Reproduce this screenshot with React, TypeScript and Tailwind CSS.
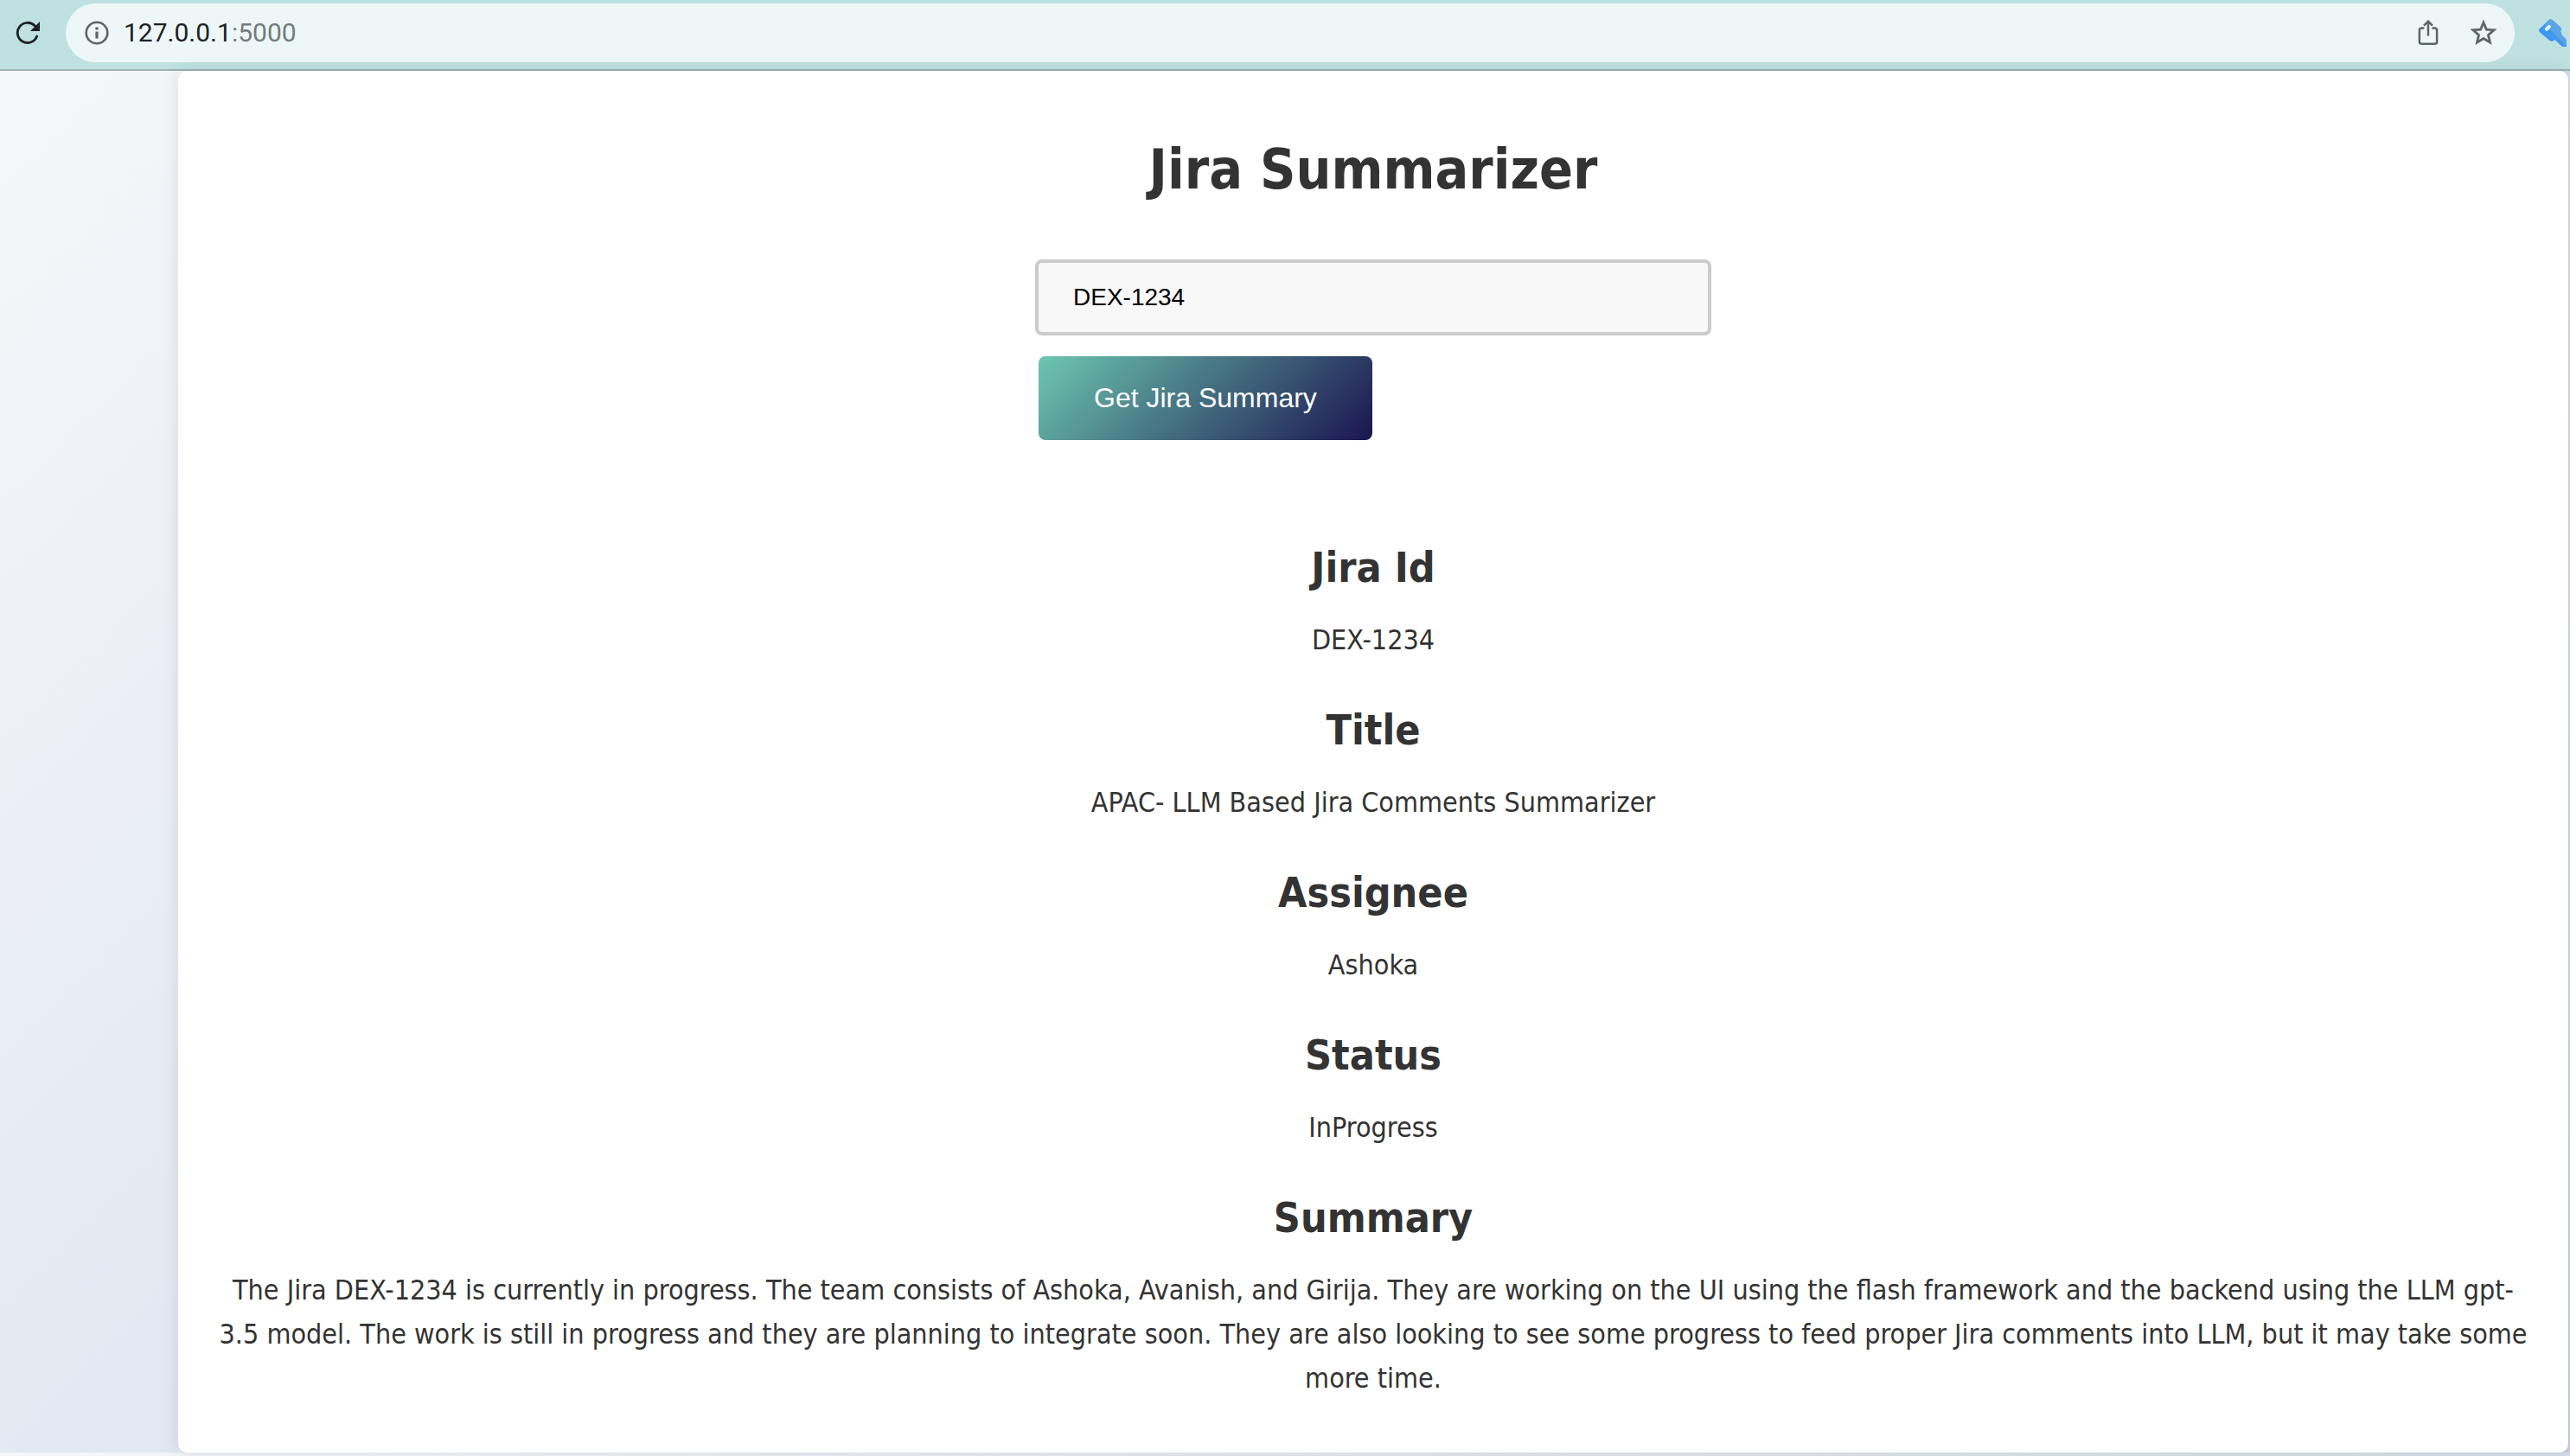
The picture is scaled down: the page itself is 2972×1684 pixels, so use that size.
const details = [
  { label: "Jira Id", value: "DEX-1234" },
  { label: "Title", value: "APAC- LLM Based Jira Comments Summarizer" },
  { label: "Assignee", value: "Ashoka" },
  { label: "Status", value: "InProgress" },
  {
    label: "Summary",
    value:
      "The Jira DEX-1234 is currently in progress. The team consists of Ashoka, Avanish, and Girija. They are working on the UI using the flash framework and the backend using the LLM gpt-3.5 model. The work is still in progress and they are planning to integrate soon. They are also looking to see some progress to feed proper Jira comments into LLM, but it may take some more time.",
  },
];

function ReloadIcon() {
  return (
    <svg width="28" height="28" viewBox="0 0 28 28" fill="none" aria-hidden="true">
      <path d="M24.7 18A11.6 11.6 0 1 1 22.2 5.8l2 2" stroke="#202124" strokeWidth="2.8" strokeLinecap="round" />
      <path d="M28 1v11H17z" fill="#202124" />
    </svg>
  );
}

function InfoIcon() {
  return (
    <svg width="28" height="28" viewBox="0 0 28 28" fill="none" aria-hidden="true">
      <circle cx="14" cy="14" r="12.3" stroke="#5f6368" strokeWidth="2.6" />
      <path d="M12.4 7.4h3.2v3.2h-3.2zM12.4 12.600h3.200v8h-3.200z" fill="#5f6368" />
    </svg>
  );
}

function ShareIcon() {
  return (
    <svg width="24" height="30" viewBox="0 0 24 30" fill="none" stroke="#5f6368" strokeWidth="2.5" aria-hidden="true">
      <path d="M7.500 9.400H4.400A2.500 2.500 0 0 0 1.900 11.900v13.400a2.500 2.500 0 0 0 2.500 2.500h15.200a2.500 2.500 0 0 0 2.500-2.500v-13.400a2.500 2.500 0 0 0-2.500-2.500H16.500" />
      <path d="M12 18.500V2.500M7 6.700l5-5 5 5" />
    </svg>
  );
}

function StarIcon() {
  return (
    <svg width="36" height="36" viewBox="0 0 24 24" fill="#5f6368" stroke="#5f6368" strokeWidth="0.3" aria-hidden="true">
      <path d="M22 9.240l-7.190-.620L12 2 9.190 8.630 2 9.240l5.460 4.730L5.820 21 12 17.270 18.180 21l-1.630-7.030L22 9.240zM12 15.400l-3.760 2.270 1-4.280-3.320-2.880 4.380-.380L12 6.100l1.710 4.040 4.380.380-3.320 2.880 1 4.280L12 15.400z" />
    </svg>
  );
}

function KeyIcon() {
  return (
    <svg width="32" height="32" viewBox="0 0 32 32" aria-hidden="true">
      <path d="M.6 11.500 11.800.8q1.700-1.300 3.400 0L25 9.500q1.400 1.500.6 3.500l-.6 1.500 1.500 2.500-.5 1.500 2 .8.500 2 2 .7 1.500 3.500V32h-5l-8.500-8-2.500 1.500q-2 .8-3.500-.5L.8 15q-1.500-1.700-.2-3.500z" fill="#3f97f0" />
      <path d="M6.300 6 11.800.8q1.700-1.300 3.400 0L25 9.500q1.400 1.500.6 3.500l-.6 1.500 1.500 2.500-.5 1.500 2 .8.500 2 2 .7 1.500 3.500V31z" fill="#5aa5e4" />
      <path d="M7 10.700 11 7.100q1.200-.8 2.300.3t.3 2.300L10 13.500q-1.200.7-2.400-.3T7 10.700z" fill="#e6f4fa" />
    </svg>
  );
}

export default function App() {
  return (
    <div className="min-h-screen overflow-x-hidden font-['DejaVu_Sans_Condensed','DejaVu_Sans',sans-serif] text-[#333333]">
      <header className="flex h-[82px] items-center border-b-2 border-[#9bb3b6] bg-[#bfe1e2] pb-1 pl-[18px]">
        <button type="button" aria-label="Reload" className="shrink-0">
          <ReloadIcon />
        </button>
        <div className="ml-[30px] flex h-[68px] flex-1 items-center rounded-full bg-[#eef7f8] pr-[18px] pl-[22px]">
          <button type="button" aria-label="View site information" className="shrink-0">
            <InfoIcon />
          </button>
          <p className="ml-[17px] flex-1 font-[Roboto,sans-serif] text-[30px] leading-9 text-[#202124]">
            127.0.0.1<span className="text-[#747a7d]">:5000</span>
          </p>
          <button type="button" aria-label="Share this page" className="shrink-0">
            <ShareIcon />
          </button>
          <button type="button" aria-label="Bookmark this page" className="ml-[34px] shrink-0">
            <StarIcon />
          </button>
        </div>
        <button type="button" aria-label="Extension" className="mr-1 ml-7 shrink-0">
          <KeyIcon />
        </button>
      </header>

      <div className="bg-linear-[135deg,#f5f7fa,#c3cfe2] pr-0.5 pl-[206px]">
        <main className="relative rounded-[10px] bg-white px-11 pt-16 pb-[60px] text-center shadow-[0_0_20px_rgba(0,0,0,0.1)]">
          <h1 className="text-[64px] leading-[100px] font-bold">Jira Summarizer</h1>
          <form className="mx-auto mt-[54px] flex w-[782px] max-w-full flex-col items-start gap-6" onSubmit={(e) => e.preventDefault()}>
            <input
              type="text"
              aria-label="Jira Id"
              defaultValue="DEX-1234"
              className="h-[88px] w-full rounded-lg border-4 border-[#cbcbcb] bg-[#f8f8f8] px-10 font-['Liberation_Sans',sans-serif] text-[28px] text-black"
            />
            <button
              type="submit"
              className="ml-1 h-[97px] rounded-lg bg-linear-[135deg,#6dc7b0,#1a1450] px-16 pb-0.5 font-['Liberation_Sans',sans-serif] text-[32px] text-white"
            >
              Get Jira Summary
            </button>
          </form>
          <div className="mt-[109px] flex flex-col gap-10">
            {details.map((item) => (
              <section key={item.label} className="flex flex-col gap-5">
                <h2 className="text-[48px] leading-[77px] font-bold">{item.label}</h2>
                <p className="text-[32px] leading-[51px]">{item.value}</p>
              </section>
            ))}
          </div>
        </main>
      </div>
      <div className="h-1 bg-linear-to-r from-[#f5f7fa] to-[#d5dde9]" />
    </div>
  );
}
